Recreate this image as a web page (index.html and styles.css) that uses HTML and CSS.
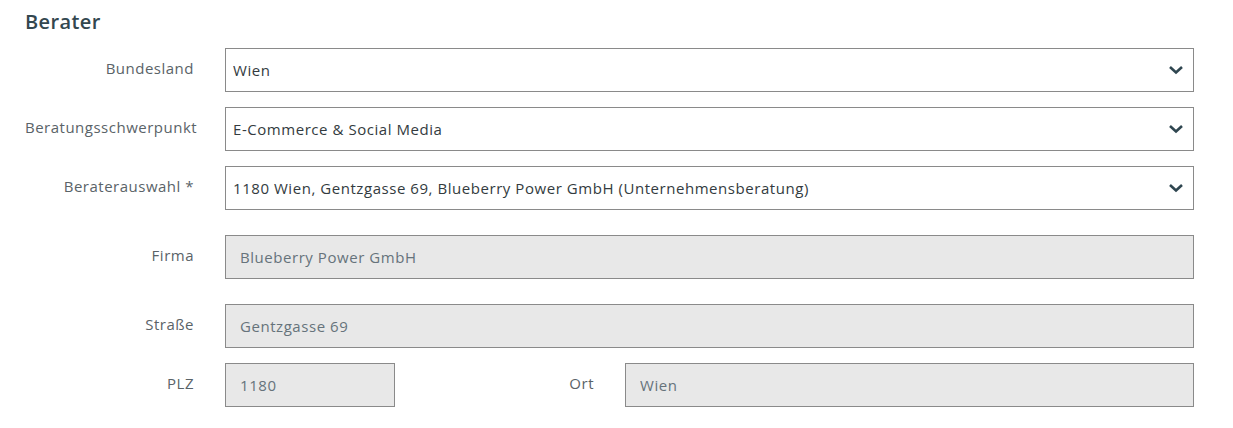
FILE: index.html
```html
<!DOCTYPE html>
<html>
<head>
  <title>Berater</title>
  <link rel="stylesheet" href="styles.css">
</head>
<body>

  <section class="berater">
    <h2 class="section-title">Berater</h2>

    <form class="berater-form">
      <div class="row">
        <label for="bundesland">Bundesland</label>
        <div class="select-wrap">
          <select id="bundesland">
            <option>Wien</option>
          </select>
          <svg class="chevron" width="16" height="10" viewBox="0 0 16 10"><path d="M2 2 L8 7.5 L14 2" fill="none" stroke="#2f4650" stroke-width="2.6"/></svg>
        </div>
      </div>

      <div class="row">
        <label for="schwerpunkt">Beratungsschwerpunkt</label>
        <div class="select-wrap">
          <select id="schwerpunkt">
            <option>E-Commerce &amp; Social Media</option>
          </select>
          <svg class="chevron" width="16" height="10" viewBox="0 0 16 10"><path d="M2 2 L8 7.5 L14 2" fill="none" stroke="#2f4650" stroke-width="2.6"/></svg>
        </div>
      </div>

      <div class="row">
        <label for="berater">Beraterauswahl *</label>
        <div class="select-wrap">
          <select id="berater">
            <option>1180 Wien, Gentzgasse 69, Blueberry Power GmbH (Unternehmensberatung)</option>
          </select>
          <svg class="chevron" width="16" height="10" viewBox="0 0 16 10"><path d="M2 2 L8 7.5 L14 2" fill="none" stroke="#2f4650" stroke-width="2.6"/></svg>
        </div>
      </div>

      <div class="row row-wide">
        <label for="firma">Firma</label>
        <input type="text" id="firma" value="Blueberry Power GmbH" readonly>
      </div>

      <div class="row row-wide">
        <label for="strasse">Straße</label>
        <input type="text" id="strasse" value="Gentzgasse 69" readonly>
      </div>

      <div class="row row-split">
        <label for="plz">PLZ</label>
        <input type="text" id="plz" value="1180" readonly>
        <label for="ort">Ort</label>
        <input type="text" id="ort" value="Wien" readonly>
      </div>
    </form>
  </section>

</body>
</html>
```

FILE: styles.css
```css
body {
  margin: 0;
  background: #fff;
  font-family: "Open Sans", "Liberation Sans", sans-serif;
  color: #555e63;
}

.berater {
  padding: 10px 39px 0 25px;
}

.section-title {
  margin: 0 0 14px;
  font-size: 20px;
  line-height: 24px;
  font-weight: 600;
  letter-spacing: 0.4px;
  color: #33474f;
}

.berater-form {
  display: flex;
  flex-direction: column;
  gap: 15px;
}

.row {
  display: grid;
  grid-template-columns: 169px 1fr;
  column-gap: 31px;
  align-items: center;
}

.row-wide {
  margin-top: 10px;
}

.row-split {
  grid-template-columns: 169px 170px 168px 1fr;
}

label {
  text-align: right;
  font-size: 15px;
  letter-spacing: 0.5px;
  color: #5a6368;
  padding-bottom: 5px;
  white-space: nowrap;
}

.select-wrap {
  position: relative;
}

select,
input[type="text"] {
  display: block;
  width: 100%;
  box-sizing: border-box;
  height: 44px;
  margin: 0;
  border: 1px solid #8a8a8a;
  border-radius: 0;
  font-family: inherit;
  font-size: 15px;
  letter-spacing: 0.55px;
  outline: none;
}

select {
  appearance: none;
  -webkit-appearance: none;
  background: #fff;
  color: #333b40;
  padding: 0 40px 0 7px;
}

input[type="text"] {
  background: #e8e8e8;
  color: #66737b;
  padding: 0 14px;
}

.chevron {
  position: absolute;
  right: 10px;
  top: 17px;
}
```
